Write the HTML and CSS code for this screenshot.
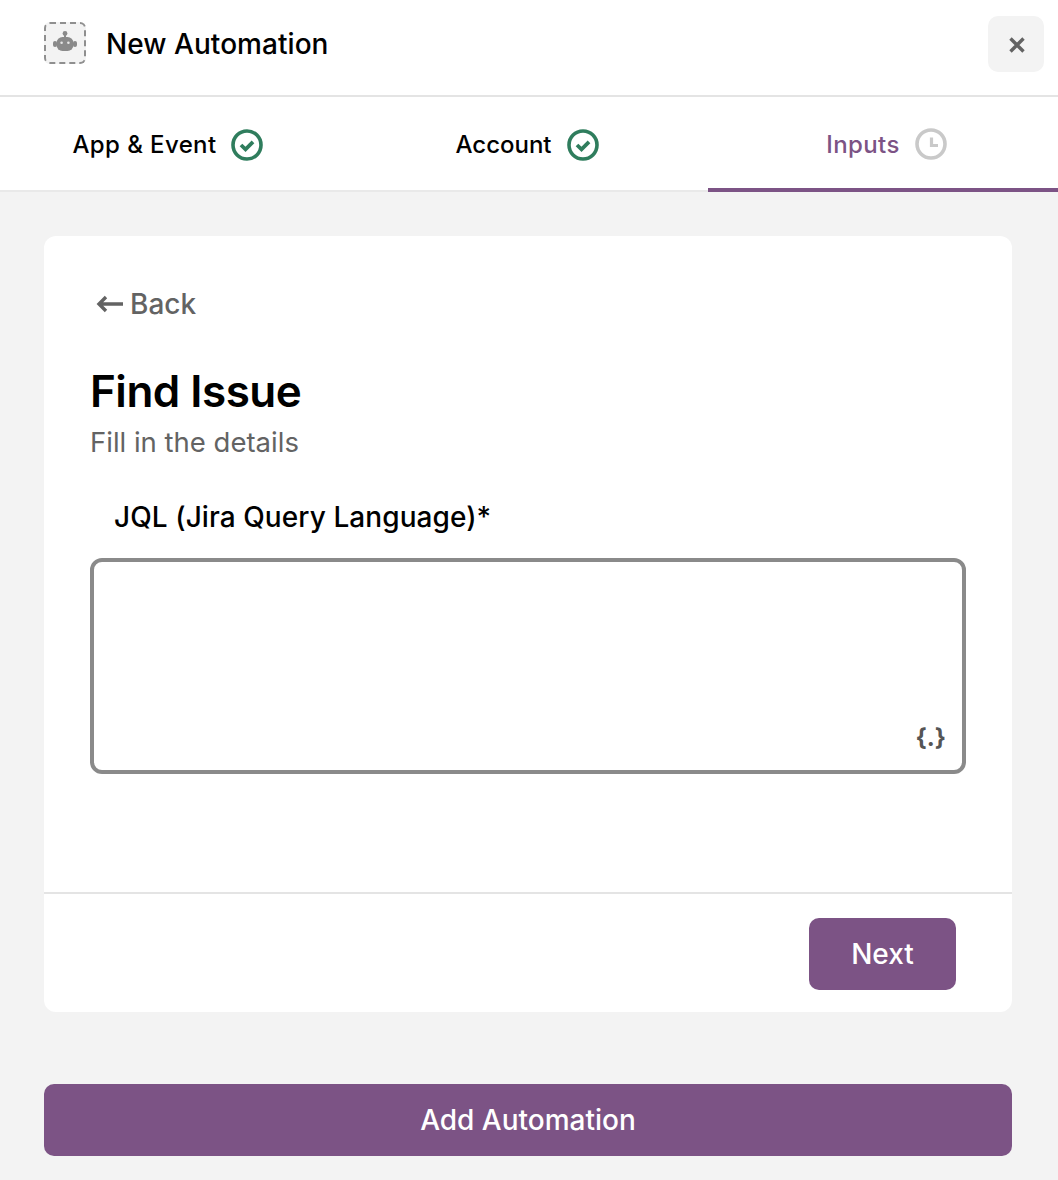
FILE: index.html
```html
<!DOCTYPE html>
<html lang="en">
<head>
<meta charset="utf-8">
<title>New Automation</title>
<link rel="stylesheet" href="styles.css">
</head>
<body>
<header class="header">
  <div class="title-group">
    <span class="robot-box">
      <svg width="26" height="24" viewBox="0 0 26 24" aria-hidden="true">
        <circle cx="13" cy="2.4" r="2.4" fill="#8a8a8a"/>
        <rect x="12" y="3" width="2" height="4" fill="#8a8a8a"/>
        <rect x="4.5" y="6" width="17" height="14" rx="6" fill="#8a8a8a"/>
        <rect x="1" y="10" width="4" height="6" rx="2" fill="#8a8a8a"/>
        <rect x="21" y="10" width="4" height="6" rx="2" fill="#8a8a8a"/>
        <circle cx="9.6" cy="11.8" r="1.3" fill="#e6e6e6"/>
        <circle cx="16.4" cy="11.8" r="1.3" fill="#e6e6e6"/>
      </svg>
    </span>
    <h1 class="title">New Automation</h1>
  </div>
  <button class="close" aria-label="Close">
    <svg width="16" height="16" viewBox="0 0 16 16" aria-hidden="true">
      <path d="M1.5 1.5 L14.5 14.5 M14.5 1.5 L1.5 14.5" stroke="#636363" stroke-width="3.4" fill="none"/>
    </svg>
  </button>
</header>
<nav class="tabs">
  <div class="tab tab-first">
    <span>App &amp; Event</span>
    <svg class="tab-icon" viewBox="0 0 32 32" aria-hidden="true">
      <circle cx="16" cy="16" r="14" fill="none" stroke="#2f7d5d" stroke-width="3.6"/>
      <path d="M10 16 L14.5 20.3 L22 12.8" fill="none" stroke="#2f7d5d" stroke-width="3.8"/>
    </svg>
  </div>
  <div class="tab tab-second">
    <span>Account</span>
    <svg class="tab-icon" viewBox="0 0 32 32" aria-hidden="true">
      <circle cx="16" cy="16" r="14" fill="none" stroke="#2f7d5d" stroke-width="3.6"/>
      <path d="M10 16 L14.5 20.3 L22 12.8" fill="none" stroke="#2f7d5d" stroke-width="3.8"/>
    </svg>
  </div>
  <div class="tab tab-active">
    <span>Inputs</span>
    <svg class="tab-icon" viewBox="0 0 32 32" aria-hidden="true">
      <circle cx="16" cy="16" r="14" fill="none" stroke="#c9c9c9" stroke-width="3.6"/>
      <path d="M16.5 9.5 V17.5 H23" fill="none" stroke="#c9c9c9" stroke-width="3.2"/>
    </svg>
  </div>
</nav>
<main class="main">
  <section class="card">
    <div class="card-body">
      <a class="back">
        <svg width="28" height="18" viewBox="0 0 28 18" aria-hidden="true">
          <path d="M27 9 H3 M10 2 L3 9 L10 16" fill="none" stroke="#636363" stroke-width="3.4"/>
        </svg>
        <span>Back</span>
      </a>
      <h2 class="heading">Find Issue</h2>
      <p class="sub">Fill in the details</p>
      <label class="label">JQL (Jira Query Language)<span class="star">*</span></label>
      <div class="field">
        <span class="var">{.}</span>
      </div>
    </div>
    <div class="card-foot">
      <button class="btn btn-next">Next</button>
    </div>
  </section>
  <button class="btn btn-add">Add Automation</button>
</main>
</body>
</html>
```
FILE: styles.css
```css
* { box-sizing: border-box; }
html, body { margin: 0; padding: 0; }
body {
  width: 1058px;
  height: 1180px;
  background: #f3f3f3;
  font-family: Inter, "Liberation Sans", sans-serif;
  color: #000;
  overflow: hidden;
}
.header {
  height: 97px;
  background: #fff;
  border-bottom: 2px solid #e4e4e4;
  display: flex;
  align-items: flex-start;
  justify-content: space-between;
  padding: 16px 14px 0 44px;
}
.title-group { display: flex; align-items: center; gap: 20px; padding-top: 6px; }
.robot-box {
  width: 42px;
  height: 42px;
  border: 2px dashed #8f8f8f;
  border-radius: 6px;
  background: #f3f3f3;
  display: flex;
  align-items: center;
  justify-content: center;
}
.title { margin: 0; padding-top: 2px; font-size: 28px; font-weight: 500; line-height: 32px; letter-spacing: 0.05px; }
.close {
  width: 56px;
  height: 56px;
  border: 0;
  border-radius: 10px;
  background: #f3f3f3;
  display: flex;
  align-items: center;
  justify-content: center;
  padding: 2px 0 0 2px;
}
.tabs {
  height: 95px;
  background: #fff;
  border-bottom: 2px solid #e9e9e9;
  display: flex;
}
.tab {
  flex: 0 0 354px;
  display: flex;
  align-items: center;
  justify-content: center;
  gap: 15px;
  font-size: 24px;
  font-weight: 500;
  letter-spacing: 0.4px;
  height: 95px;
}
.tab-first { padding-right: 19px; gap: 14px; }
.tab-second { padding-right: 8px; letter-spacing: 0; }
.tab-active {
  flex: 0 0 350px;
  color: #7c5385;
  border-bottom: 4px solid #7c5385;
  border-radius: 4px 0 0 0;
  padding: 4px 0 0 7px;
}
.tab-active .tab-icon { margin-top: -2px; }
.tab-icon { width: 32px; height: 32px; display: block; }
.main { padding: 44px 46px 0 44px; }
.card {
  background: #fff;
  border-radius: 12px;
  height: 776px;
  display: flex;
  flex-direction: column;
}
.card-body { flex: 1 1 auto; padding: 50px 46px 0 46px; border-bottom: 2px solid #e4e4e4; }
.back {
  display: flex;
  align-items: center;
  gap: 6px;
  color: #636363;
  font-size: 28px;
  font-weight: 500;
  line-height: 36px;
  padding-left: 6px;
}
.heading { margin: 43px 0 0; font-size: 44px; font-weight: 600; line-height: 52px; letter-spacing: -0.5px; }
.sub { margin: 9px 0 0; color: #636363; font-size: 27.5px; font-weight: 400; line-height: 32px; }
.label {
  display: block;
  margin-top: 41px;
  padding-left: 24px;
  font-size: 28px;
  font-weight: 500;
  line-height: 36px;
  letter-spacing: 0.08px;
}
.star { margin-left: 0; }
.field {
  margin-top: 23px;
  width: 876px;
  height: 216px;
  border: 4px solid #8a8a8a;
  border-radius: 12px;
  position: relative;
}
.var {
  position: absolute;
  right: 16px;
  bottom: 18px;
  color: #555;
  font-size: 24px;
  font-weight: 700;
  line-height: 28px;
}
.card-foot {
  height: 118px;
  display: flex;
  justify-content: flex-end;
  padding: 24px 56px 0 0;
}
.btn {
  border: 0;
  background: #7c5385;
  color: #fff;
  font-family: inherit;
  font-size: 28px;
  font-weight: 500;
  border-radius: 10px;
  height: 72px;
}
.btn-next { width: 147px; }
.btn-add { display: block; width: 968px; margin-top: 72px; }
```
